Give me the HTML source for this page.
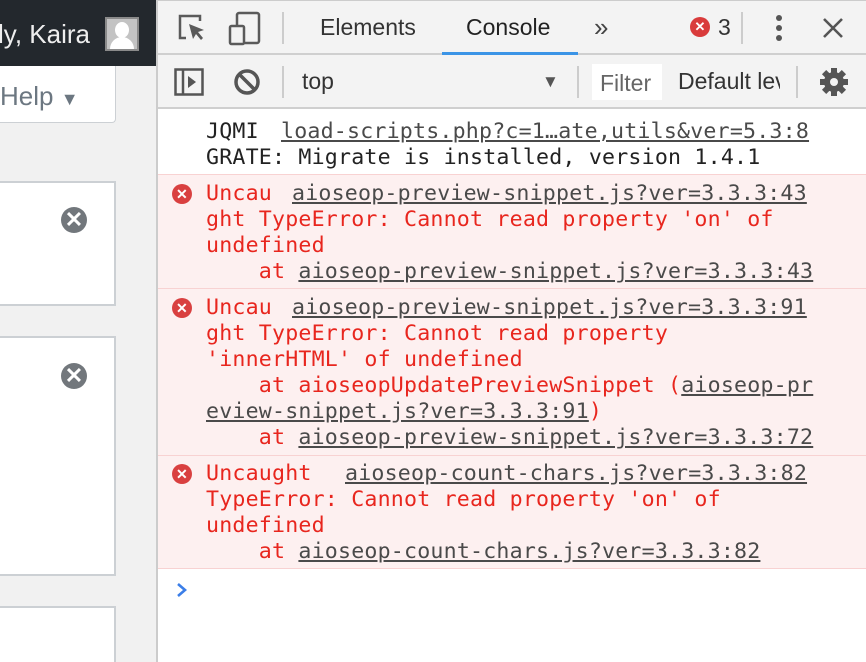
<!DOCTYPE html>
<html><head><style>
*{margin:0;padding:0;box-sizing:border-box}
html,body{width:866px;height:662px;overflow:hidden}
body{background:#f1f1f1;position:relative;font-family:"Liberation Sans",sans-serif}
.a{position:absolute}
.mono{font-family:"DejaVu Sans Mono","Liberation Mono",monospace;font-size:21.6px;letter-spacing:0.2px;white-space:pre;line-height:26px}
.l{position:absolute;left:206px}
.r{color:#e8261e}
.u{color:#4a4a4a;text-decoration:underline}
.blk{position:absolute;left:158px;right:0;background:#fdf0f0;border-top:1px solid #f8d2d2}
.ei{position:absolute;left:172px;width:20px;height:20px;border-radius:50%;background:#d94040;color:#fff;font-size:14px;font-weight:bold;text-align:center;line-height:20px;font-family:"Liberation Sans",sans-serif}
</style></head><body>
<div class="a" style="left:0;top:0;width:157px;height:66px;background:#23282d"></div>
<div class="a" style="left:-2px;top:19px;color:#eee;font-size:26px">ly, Kaira</div>
<div class="a" style="left:105px;top:17px;width:34px;height:34px;background:#c3c3c3;border:2px solid #8a8a8a;overflow:hidden">
<div class="a" style="left:8px;top:3px;width:14px;height:16px;border-radius:50%;background:#fff"></div>
<div class="a" style="left:3px;top:18px;width:24px;height:16px;border-radius:12px 12px 0 0;background:#fff"></div></div>
<div class="a" style="left:-5px;top:66px;width:121px;height:57px;background:#fff;border:1px solid #ccd0d4;border-top:none;border-radius:0 0 4px 4px"></div>
<div class="a" style="left:0;top:81px;color:#6c7781;font-size:26px">Help <span style="font-size:18px;color:#6c7781">▼</span></div>
<div class="a" style="left:-5px;top:181px;width:121px;height:125px;background:#fff;border:2px solid #ccd0d4"></div>
<div class="a" style="left:61px;top:207px;width:26px;height:26px;border-radius:50%;background:#72777c;color:#fff;font-size:22px;font-weight:bold;text-align:center;line-height:26px">✕</div>
<div class="a" style="left:-5px;top:336px;width:121px;height:240px;background:#fff;border:2px solid #ccd0d4"></div>
<div class="a" style="left:61px;top:363px;width:26px;height:26px;border-radius:50%;background:#72777c;color:#fff;font-size:22px;font-weight:bold;text-align:center;line-height:26px">✕</div>
<div class="a" style="left:-5px;top:606px;width:121px;height:70px;background:#fff;border:2px solid #ccd0d4"></div>
<div class="a" style="left:156px;top:0;width:2px;height:662px;background:#ccc"></div>
<div class="a" style="left:158px;top:0;right:0;height:662px;background:#fff"></div>
<div class="a" style="left:158px;top:0;right:0;height:55px;background:#f3f3f3;border-bottom:2px solid #cfcfcf;border-top:1px solid #ccc"></div>
<div class="a" style="left:158px;top:55px;right:0;height:54px;background:#f3f3f3;border-bottom:2px solid #cfcfcf"></div>
<svg class="a" style="left:176px;top:12px" width="34" height="34" viewBox="0 0 34 34"><path d="M10 26H4V4h20v5" fill="none" stroke="#5a5a5a" stroke-width="2.5"/><path d="M13 12l15 6-6 2 5 6-2 2-5-6-3 5z" fill="#5a5a5a"/></svg>
<svg class="a" style="left:228px;top:11px" width="34" height="36" viewBox="0 0 34 36"><rect x="9" y="2" width="22" height="30" rx="2" fill="none" stroke="#5a5a5a" stroke-width="2.5"/><rect x="2" y="15" width="14" height="18" rx="1.5" fill="#f3f3f3" stroke="#5a5a5a" stroke-width="2.5"/></svg>
<div class="a" style="left:282px;top:12px;width:2px;height:32px;background:#ccc"></div>
<div class="a" style="left:320px;top:14px;font-size:23px;color:#333">Elements</div>
<div class="a" style="left:466px;top:14px;font-size:23px;color:#222">Console</div>
<div class="a" style="left:442px;top:52px;width:136px;height:3px;background:#3b94e6"></div>
<div class="a" style="left:594px;top:12px;font-size:26px;color:#444">»</div>
<div class="a" style="left:690px;top:17px;width:20px;height:20px;border-radius:50%;background:#d93b3b;color:#fff;font-size:13px;font-weight:bold;text-align:center;line-height:20px">✕</div>
<div class="a" style="left:718px;top:14px;font-size:23px;color:#333">3</div>
<div class="a" style="left:741px;top:12px;width:2px;height:32px;background:#ccc"></div>
<div class="a" style="left:776px;top:15px;width:6px;height:6px;border-radius:50%;background:#555;box-shadow:0 10px 0 #555,0 20px 0 #555"></div>
<svg class="a" style="left:822px;top:17px" width="22" height="22"><path d="M2 2L20 20M20 2L2 20" stroke="#555" stroke-width="2.6"/></svg>
<svg class="a" style="left:174px;top:68px" width="30" height="28"><rect x="1.5" y="1.5" width="27" height="25" fill="none" stroke="#555" stroke-width="2.5"/><path d="M9 2v24" stroke="#555" stroke-width="2.5"/><path d="M14 8l8 6-8 6z" fill="#555"/></svg>
<svg class="a" style="left:233px;top:68px" width="28" height="28"><circle cx="14" cy="14" r="11" fill="none" stroke="#555" stroke-width="3.5"/><path d="M6 6l16 16" stroke="#555" stroke-width="3.5"/></svg>
<div class="a" style="left:282px;top:66px;width:2px;height:32px;background:#ccc"></div>
<div class="a" style="left:302px;top:68px;font-size:23px;color:#333">top</div>
<div class="a" style="left:542px;top:72px;font-size:17px;color:#555">▼</div>
<div class="a" style="left:577px;top:66px;width:2px;height:32px;background:#ccc"></div>
<div class="a" style="left:592px;top:64px;width:70px;height:36px;background:#fff"></div>
<div class="a" style="left:600px;top:70px;font-size:23px;color:#666">Filter</div>
<div class="a" style="left:678px;top:68px;font-size:23px;color:#333;width:102px;overflow:hidden;white-space:nowrap">Default levels</div>
<div class="a" style="left:796px;top:66px;width:2px;height:32px;background:#ccc"></div>
<svg class="a" style="left:818px;top:66px" width="32" height="32" viewBox="0 0 32 32"><g fill="#555"><circle cx="16" cy="16" r="10"/><rect x="13" y="2" width="6" height="28"/><rect x="2" y="13" width="28" height="6"/><rect x="13" y="2" width="6" height="28" transform="rotate(45 16 16)"/><rect x="13" y="2" width="6" height="28" transform="rotate(-45 16 16)"/></g><circle cx="16" cy="16" r="4" fill="#f3f3f3"/></svg>
<div class="mono">
<div class="l" style="top:119px;color:#222">JQMI</div><div class="l u" style="top:119px;left:281px">load-scripts.php?c=1…ate,utils&amp;ver=5.3:8</div>
<div class="l" style="top:145px;color:#222">GRATE: Migrate is installed, version 1.4.1</div>
<div class="blk" style="top:174px;height:114px"></div>
<div class="ei" style="top:184px">✕</div>
<div class="l r" style="top:181px">Uncau</div><div class="l u" style="top:181px;left:292px">aioseop-preview-snippet.js?ver=3.3.3:43</div>
<div class="l r" style="top:207px">ght TypeError: Cannot read property 'on' of</div>
<div class="l r" style="top:233px">undefined</div>
<div class="l r" style="top:259px">    at <span class="u">aioseop-preview-snippet.js?ver=3.3.3:43</span></div>
<div class="blk" style="top:288px;height:167px"></div>
<div class="ei" style="top:298px">✕</div>
<div class="l r" style="top:295px">Uncau</div><div class="l u" style="top:295px;left:292px">aioseop-preview-snippet.js?ver=3.3.3:91</div>
<div class="l r" style="top:321px">ght TypeError: Cannot read property</div>
<div class="l r" style="top:347px">'innerHTML' of undefined</div>
<div class="l r" style="top:373px">    at aioseopUpdatePreviewSnippet (<span class="u">aioseop-pr</span></div>
<div class="l r" style="top:399px"><span class="u">eview-snippet.js?ver=3.3.3:91</span>)</div>
<div class="l r" style="top:425px">    at <span class="u">aioseop-preview-snippet.js?ver=3.3.3:72</span></div>
<div class="blk" style="top:455px;height:114px;border-bottom:1px solid #f8d2d2"></div>
<div class="ei" style="top:464px">✕</div>
<div class="l r" style="top:461px">Uncaught</div><div class="l u" style="top:461px;left:345px">aioseop-count-chars.js?ver=3.3.3:82</div>
<div class="l r" style="top:487px">TypeError: Cannot read property 'on' of</div>
<div class="l r" style="top:513px">undefined</div>
<div class="l r" style="top:539px">    at <span class="u">aioseop-count-chars.js?ver=3.3.3:82</span></div>
</div>
<svg class="a" style="left:176px;top:582px" width="12" height="16"><path d="M2 2l7 6-7 6" fill="none" stroke="#3b7ee8" stroke-width="2.6"/></svg>
</body></html>
